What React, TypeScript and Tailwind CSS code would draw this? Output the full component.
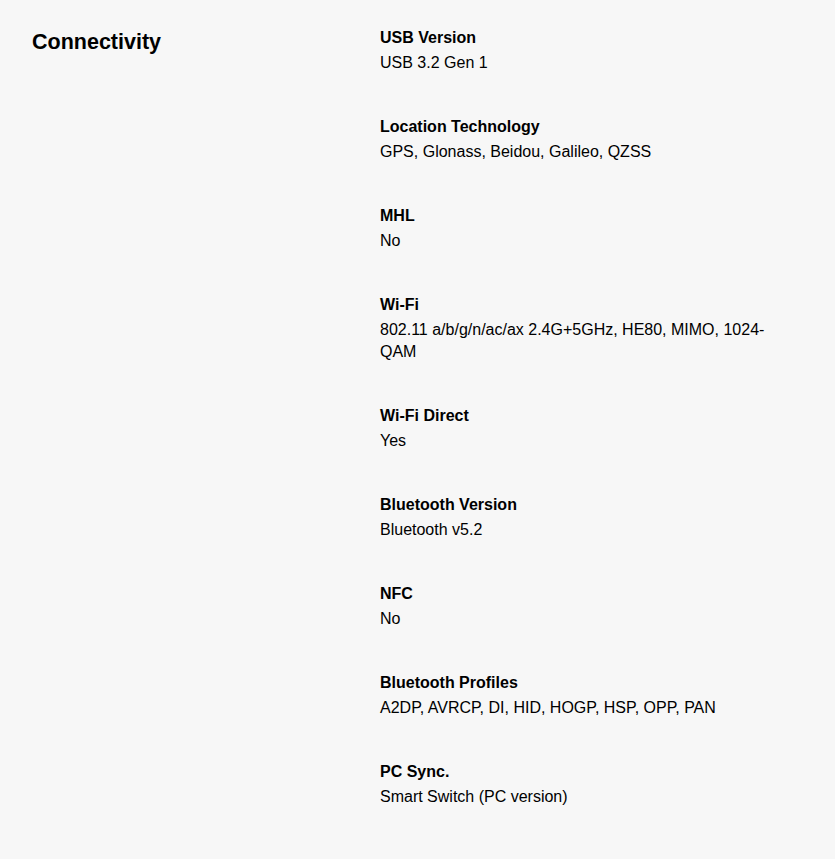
import React from "react";

const items: { label: string; value: string }[] = [
  { label: "USB Version", value: "USB 3.2 Gen 1" },
  { label: "Location Technology", value: "GPS, Glonass, Beidou, Galileo, QZSS" },
  { label: "MHL", value: "No" },
  { label: "Wi-Fi", value: "802.11 a/b/g/n/ac/ax 2.4G+5GHz, HE80, MIMO, 1024-QAM" },
  { label: "Wi-Fi Direct", value: "Yes" },
  { label: "Bluetooth Version", value: "Bluetooth v5.2" },
  { label: "NFC", value: "No" },
  { label: "Bluetooth Profiles", value: "A2DP, AVRCP, DI, HID, HOGP, HSP, OPP, PAN" },
  { label: "PC Sync.", value: "Smart Switch (PC version)" },
];

export default function App() {
  return (
    <div
      className="min-h-screen bg-[#f7f7f7] text-black px-8 pt-[25px] flex"
      style={{ fontFamily: '"Liberation Sans", Arial, sans-serif' }}
    >
      <div className="w-[348px] shrink-0">
        <h2 className="text-[21.5px] font-bold leading-7 mt-[3px]">Connectivity</h2>
      </div>
      <div className="w-[400px] flex flex-col">
        {items.map((it) => (
          <div key={it.label} className="pb-[40px]">
            <div className="text-base font-bold leading-[26px]">{it.label}</div>
            <div className="text-base leading-[22px] pt-[1px]">{it.value}</div>
          </div>
        ))}
      </div>
    </div>
  );
}
